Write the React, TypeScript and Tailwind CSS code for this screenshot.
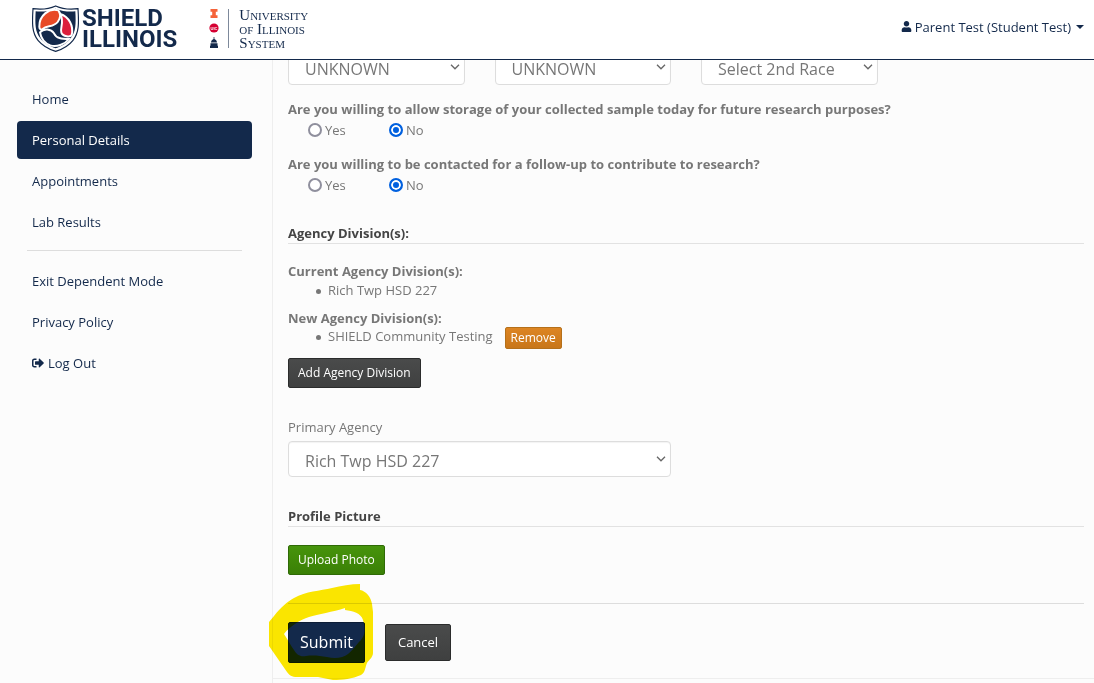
import React, { useState } from 'react';
import { FaSignOutAlt, FaUser } from 'react-icons/fa';

const Chevron: React.FC = () => (
  <svg
    viewBox="0 0 10 6"
    className="pointer-events-none absolute right-[5px] top-[15px] h-[6px] w-[10px]"
    fill="none"
    stroke="#666"
    strokeWidth="1.3"
  >
    <path d="M1 .8 5 4.8 9 .8" />
  </svg>
);

type SelectProps = {
  id: string;
  label?: string;
  options: string[];
};

const SelectBox: React.FC<SelectProps> = ({ id, label, options }) => (
  <div>
    {label && (
      <label htmlFor={id} className="mb-[5px] block">
        {label}
      </label>
    )}
    <div className="relative">
      <select
        id={id}
        aria-label={label ? undefined : id}
        className="block h-9 w-full appearance-none rounded border border-[#ddd] bg-white pl-4 pr-5 pt-[3px] text-base leading-6 text-[#777] shadow-[inset_0_1px_1px_rgba(0,0,0,0.05)]"
      >
        {options.map((option) => (
          <option key={option}>{option}</option>
        ))}
      </select>
      <Chevron />
    </div>
  </div>
);

const YesNoQuestion: React.FC<{ name: string; question: string }> = ({ name, question }) => {
  const [answer, setAnswer] = useState('No');

  return (
    <fieldset className="mt-[14px]">
      <legend className="leading-5 font-bold">{question}</legend>
      <div className="mt-px flex pl-5">
        {['Yes', 'No'].map((value) => (
          <label key={value} className="flex w-[81px] items-center gap-[3px] leading-5">
            <input
              type="radio"
              name={name}
              value={value}
              checked={answer === value}
              onChange={() => setAnswer(value)}
              className="h-[14px] w-[14px] appearance-none rounded-full border-2 border-[#8f8f9d] bg-white checked:border-[#0060df] checked:bg-[#0060df] checked:shadow-[inset_0_0_0_2px_white]"
            />
            {value}
          </label>
        ))}
      </div>
    </fieldset>
  );
};

const NavLink: React.FC<{ active?: boolean; children: React.ReactNode }> = ({ active, children }) => (
  <a
    href="#"
    className={
      active
        ? 'flex h-[38px] items-center gap-1 rounded bg-[#13294b] px-[15px] text-white'
        : 'flex h-[38px] items-center gap-1 rounded px-[15px] text-[#13294b]'
    }
  >
    {children}
  </a>
);

const DivisionItem: React.FC<{ children: React.ReactNode }> = ({ children }) => (
  <li className="flex items-start gap-[7px]">
    <span className="mt-2 h-[5px] w-[5px] rounded-full bg-[#777]" />
    {children}
  </li>
);

const ShieldLogo: React.FC = () => (
  <a href="#" className="flex items-center gap-[3px] text-[#13294b]">
    <svg viewBox="5 4 141 141" className="h-[47px] w-[47px]" aria-hidden="true">
      <path
        d="M76 7C56 16 31 18 8 15 5 60 5 88 23 110 38 128 56 137 76 143 96 137 114 128 128 110 146 88 146 60 143 15 120 18 96 16 76 7Z"
        fill="#fff"
        stroke="#13294b"
        strokeWidth="3.500"
      />
      <path
        d="M76 15C57 23 35 25 16 23 14 62 14 84 30 104 42 120 58 128 76 134 94 128 109 120 121 104 137 84 137 62 135 23 116 25 95 23 76 15Z"
        fill="#13294b"
      />
      <path
        d="M84 20C56 12 26 36 27 69 27 76 32 80 37 76 49 65 70 71 82 55 91 42 93 31 84 20Z"
        fill="#e84a27"
        stroke="#fff"
        strokeWidth="6"
      />
      <path
        d="M90 31C115 39 131 66 124 94 121 101 97 99 93 87 88 72 103 56 90 31Z"
        fill="#dc1f3c"
        stroke="#fff"
        strokeWidth="6"
      />
      <path
        d="M29 86C41 73 62 75 71 89 78 104 93 106 116 106 103 123 78 131 60 125 44 119 32 104 29 86Z"
        fill="#13294b"
        stroke="#fff"
        strokeWidth="6"
      />
    </svg>
    <span className="flex flex-col font-['Roboto',sans-serif] text-2xl leading-[21px] font-bold">
      <span>SHIELD</span>
      <span>ILLINOIS</span>
    </span>
  </a>
);

const UniversityLogo: React.FC = () => (
  <a href="#" className="flex items-center text-[#13294b]">
    <svg viewBox="0 0 12 40" className="h-10 w-3" aria-hidden="true">
      <path d="M2.500 0h7v2.800H7.800v3.400h1.700V9h-7V6.200h1.700V2.800H2.500Z" fill="#f5633a" />
      <circle cx="6" cy="19" r="4.600" fill="#d50032" />
      <text x="6" y="20.500" textAnchor="middle" fontSize="4" fontWeight="700" fontFamily="Liberation Sans" fill="#fff">
        UIC
      </text>
      <path d="M5.600 28h.8v2C8.400 30.700 8.800 32 9 33.500H3C3.200 32 3.600 30.700 5.600 30ZM2.500 34.300h7v2.500h.5V39H2v-2.200h.5Z" fill="#13294b" />
    </svg>
    <span className="ml-2 h-[39px] w-px bg-[#7d899b]" />
    <span className="ml-[10px] flex flex-col font-['Liberation_Serif',serif] text-[15px] leading-[14px] [font-variant:small-caps]">
      <span>University</span>
      <span>of Illinois</span>
      <span>System</span>
    </span>
  </a>
);

const buttonBase = 'rounded-xs border text-white';
const darkButton = 'border-[#2b2c2c] bg-linear-to-b from-[#4a4b4b] to-[#3f4040]';

const App: React.FC = () => {
  return (
    <div className="flex min-h-screen flex-col bg-[#fcfcfc] font-['Open_Sans',sans-serif] text-[13px] leading-[18px] text-[#777]">
      <header className="sticky top-0 z-10 flex h-[60px] items-center justify-between border-b border-[#13294b] bg-white pl-8 pr-[10px]">
        <div className="flex items-center gap-[31px] pb-[2px]">
          <ShieldLogo />
          <UniversityLogo />
        </div>
        <button type="button" className="flex items-center gap-[3px] pb-[6px] text-[#13294b]">
          <FaUser className="h-[11px] w-[11px]" />
          Parent Test (Student Test)
          <span className="ml-[2px] border-x-4 border-t-4 border-x-transparent border-t-[#13294b]" />
        </button>
      </header>

      <div className="flex grow">
        <nav className="flex w-[273px] shrink-0 flex-col gap-[3px] border-r border-[#eee] pl-[17px] pr-5 pt-5">
          <NavLink>Home</NavLink>
          <NavLink active>Personal Details</NavLink>
          <NavLink>Appointments</NavLink>
          <NavLink>Lab Results</NavLink>
          <hr className="mx-[10px] mb-2 mt-[6px] border-[#ddd]" />
          <NavLink>Exit Dependent Mode</NavLink>
          <NavLink>Privacy Policy</NavLink>
          <NavLink>
            <FaSignOutAlt className="h-3 w-3" />
            Log Out
          </NavLink>
        </nav>

        <main className="mt-[-11px] grow self-start border-b border-[#eee] pb-[15px] pl-[15px] pr-[10px]">
          <div className="grid grid-cols-4 gap-[30px]">
            <SelectBox id="ethnicity" options={['UNKNOWN']} />
            <SelectBox id="race" options={['UNKNOWN']} />
            <SelectBox id="second-race" options={['Select 2nd Race']} />
          </div>

          <YesNoQuestion
            name="storage"
            question="Are you willing to allow storage of your collected sample today for future research purposes?"
          />
          <YesNoQuestion
            name="follow-up"
            question="Are you willing to be contacted for a follow-up to contribute to research?"
          />

          <h3 className="mt-7 border-b border-[#e2e2e2] leading-5 font-bold text-[#444]">Agency Division(s):</h3>

          <h4 className="mt-[18px] font-bold">Current Agency Division(s):</h4>
          <ul className="mt-px pl-7">
            <DivisionItem>Rich Twp HSD 227</DivisionItem>
          </ul>

          <h4 className="mt-[10px] font-bold">New Agency Division(s):</h4>
          <ul className="pl-7">
            <DivisionItem>
              SHIELD Community Testing
              <button
                type="button"
                className={`${buttonBase} ml-[5px] h-[22px] border-[#b5701a] bg-linear-to-b from-[#dd8523] to-[#c87619] px-[5px] text-xs`}
              >
                Remove
              </button>
            </DivisionItem>
          </ul>
          <button type="button" className={`${buttonBase} ${darkButton} mt-[9px] block h-[30px] px-[9px] text-xs`}>
            Add Agency Division
          </button>

          <div className="mt-[30px] grid grid-cols-2 gap-[30px]">
            <SelectBox id="primary-agency" label="Primary Agency" options={['Rich Twp HSD 227', 'SHIELD Community Testing']} />
          </div>

          <h3 className="mt-[29px] border-b border-[#e2e2e2] leading-5 font-bold text-[#444]">Profile Picture</h3>
          <button
            type="button"
            className={`${buttonBase} mt-[18px] block h-[30px] border-[#2f6a06] bg-linear-to-b from-[#47940c] to-[#3a8006] px-[9px] text-xs`}
          >
            Upload Photo
          </button>

          <hr className="mt-7 border-[#ddd]" />

          <div className="relative mt-[18px] flex items-center gap-5">
            <button type="submit" className={`${buttonBase} h-[41px] border-[#0d1d36] bg-[#13294b] px-[11px] pb-[2px] text-base`}>
              Submit
            </button>
            <button type="button" className={`${buttonBase} ${darkButton} h-[37px] px-3 pb-[2px] text-[13px]`}>
              Cancel
            </button>
            {/* highlighter mark around the submit button */}
            <svg
              viewBox="268 583 106 99"
              className="pointer-events-none absolute -left-5 -top-[39px] h-[99px] w-[106px] mix-blend-multiply"
              aria-hidden="true"
            >
              <path
                fillRule="evenodd"
                fill="#fde800"
                d="M360 584V590C366 591 371 597 372 604L373 612V653C373 657 369 660 367 663 365 668 365 673 361 675 352 679 343 680 333 680L318 677H297C292 677 289 675 287 672L269 646V622L274 616C281 607 287 602 294 598 306 591 320 591 332 588 341 586 351 584 360 584ZM284 634C288 640 291 646 294 650 297 655 300 657 306 656 314 655 320 656 327 657 335 659 343 658 348 654 354 649 355 646 361 640 365 635 366 629 363 620 361 613 353 611 345 610V608C333 612 318 614 309 617 300 620 290 626 284 634Z"
              />
            </svg>
          </div>
        </main>
      </div>
    </div>
  );
};

export default App;
